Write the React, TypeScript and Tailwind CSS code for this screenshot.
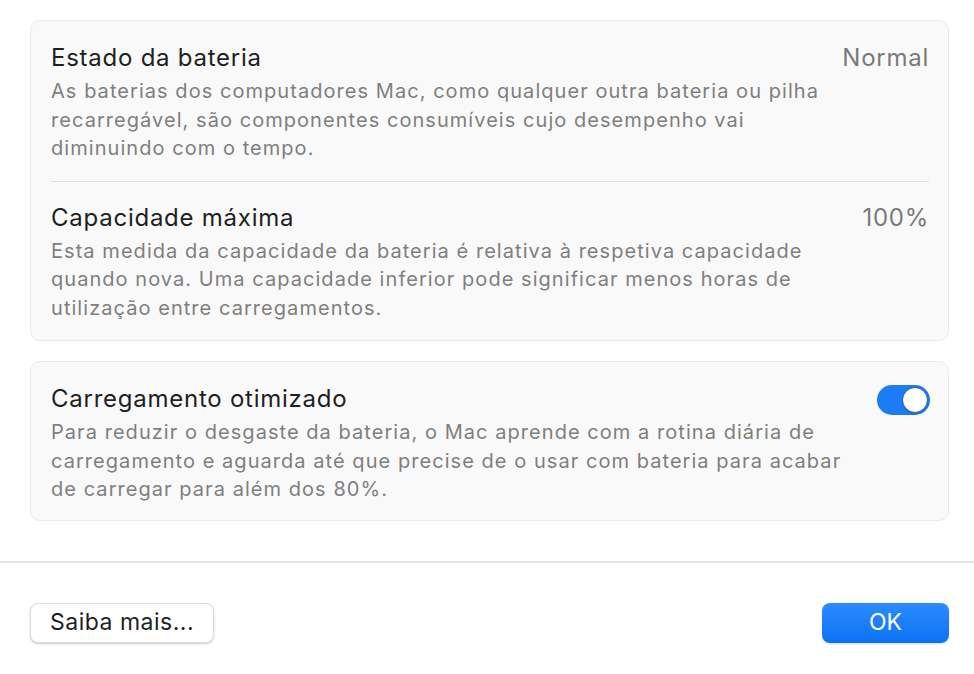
import { useState } from "react";

const font = { fontFamily: '"Inter", "Liberation Sans", sans-serif' };

function Row({ title, value, desc }: { title: string; value?: React.ReactNode; desc: string }) {
  return (
    <div>
      <div className="flex h-[28px] items-center justify-between">
        <span className="text-[24px] leading-[28px] tracking-[0.75px] text-[#1f1f1f]">{title}</span>
        {value}
      </div>
      <p className="mt-[5px] max-w-[805px] text-[20px] leading-[28.5px] tracking-[1.05px] text-[#7f7f7f]">{desc}</p>
    </div>
  );
}

function Toggle({ on, onChange }: { on: boolean; onChange: () => void }) {
  return (
    <button
      onClick={onChange}
      className={`mt-[2px] mr-[-1px] flex h-[30px] w-[53px] shrink-0 items-center rounded-full p-[2px] ${on ? "justify-end bg-[#1b7cf6]" : "justify-start bg-[#d9d9d9]"}`}
    >
      <span className="h-[26px] w-[26px] rounded-full border border-[#2a5d9c] bg-white shadow-sm" />
    </button>
  );
}

export default function App() {
  const [optimized, setOptimized] = useState(true);

  return (
    <div className="h-[674px] w-[974px] bg-white" style={font}>
      <div className="pl-[30px] pr-[25px] pt-[20px]">
        <div className="rounded-[10px] border border-[#ebebeb] bg-[#f9f9f9] pl-[20px] pr-[19px] pt-[23px] pb-[18px]">
          <Row
            title="Estado da bateria"
            value={<span className="text-[24px] leading-[28px] tracking-[0.75px] text-[#7a7a7a]">Normal</span>}
            desc="As baterias dos computadores Mac, como qualquer outra bateria ou pilha recarregável, são componentes consumíveis cujo desempenho vai diminuindo com o tempo."
          />
          <div className="mt-[18px] mb-[22px] h-px bg-[#e2e2e2]" />
          <Row
            title="Capacidade máxima"
            value={<span className="text-[24px] leading-[28px] tracking-[0.75px] text-[#7a7a7a]">100%</span>}
            desc="Esta medida da capacidade da bateria é relativa à respetiva capacidade quando nova. Uma capacidade inferior pode significar menos horas de utilização entre carregamentos."
          />
        </div>

        <div className="mt-[20px] rounded-[10px] border border-[#ebebeb] bg-[#f9f9f9] pl-[20px] pr-[19px] pt-[23px] pb-[16px]">
          <Row
            title="Carregamento otimizado"
            value={<Toggle on={optimized} onChange={() => setOptimized(!optimized)} />}
            desc="Para reduzir o desgaste da bateria, o Mac aprende com a rotina diária de carregamento e aguarda até que precise de o usar com bateria para acabar de carregar para além dos 80%."
          />
        </div>
      </div>

      <div className="mt-[40px] h-[2px] bg-[#e3e3e3]" />

      <div className="flex items-center justify-between pl-[30px] pr-[25px] pt-[40px]">
        <button className="h-[40px] w-[184px] rounded-[8px] border border-[#dcdcdc] bg-white text-[23px] tracking-[0.5px] text-[#1f1f1f] shadow-[0_1px_2px_rgba(0,0,0,0.2)]">
          Saiba mais...
        </button>
        <button className="h-[40px] w-[127px] rounded-[8px] bg-gradient-to-b from-[#2a8cff] to-[#0a72f2] text-[23px] text-white shadow-[0_1px_2px_rgba(0,0,0,0.15)]">
          OK
        </button>
      </div>
    </div>
  );
}
